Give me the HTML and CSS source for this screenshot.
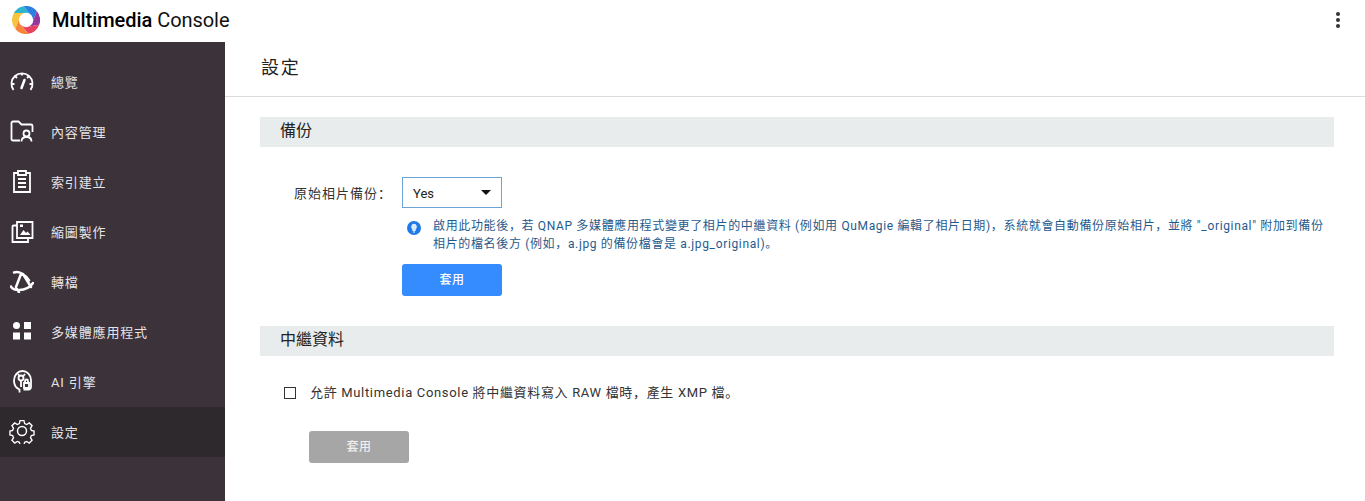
FILE: index.html
```html
<!DOCTYPE html>
<html lang="zh-Hant">
<head>
<meta charset="utf-8">
<title>Multimedia Console</title>
<link rel="stylesheet" href="styles.css">
</head>
<body>
<header class="topbar">
  <svg class="logo" viewBox="0 0 28 28" aria-hidden="true">
    <path d="M14.61 7.03 1.88 7A14 14 0 0 1 11.57.21L19.73 9.98Z" fill="#2fb4d0"/>
    <path d="M19.73 9.98 11.57.21A14 14 0 0 1 24.72 5L20.34 16.96Z" fill="#2b7fe2"/>
    <path d="M20.34 16.96 24.72 5A14 14 0 0 1 27.16 18.79L14.61 20.97Z" fill="#93389f"/>
    <path d="M14.61 20.97 27.16 18.79A14 14 0 0 1 16.43 27.79L8.27 18.02Z" fill="#e8405f"/>
    <path d="M8.27 18.02 16.43 27.79A14 14 0 0 1 3.28 23L7.66 11.04Z" fill="#f9853a"/>
    <path d="M7.66 11.04 3.28 23A14 14 0 0 1 1.88 7L14.61 7.03Z" fill="#f7c53c"/>
    <circle cx="14" cy="14" r="7.200" fill="#fff"/>
  </svg>
  <div class="brand"><b>Multimedia</b> Console</div>
  <svg class="more" viewBox="0 0 6 18" aria-hidden="true"><circle cx="3" cy="3" r="2"/><circle cx="3" cy="9" r="2"/><circle cx="3" cy="15" r="2"/></svg>
</header>
<div class="body">
  <nav class="sidebar">
    <a class="item"><svg class="ico" viewBox="0 0 24 24"><path d="M3.500 21A10.500 10.500 0 1 1 20.500 21M12 4.500v2M5.500 7.500 7 9M18.500 7.500 17 9M2.500 15h2M19.500 15h2"/><path class="thick" d="M14.500 11 11.500 19"/></svg><span>總覽</span></a>
    <a class="item"><svg class="ico" viewBox="0 0 24 24"><path d="M10 21.500H3a1.500 1.500 0 0 1-1.500-1.500V4a1.500 1.500 0 0 1 1.500-1.500h5.500l3 3H21A1.500 1.500 0 0 1 22.500 7v6"/><circle cx="16.500" cy="14.500" r="3"/><path d="M11.500 22.500c0-3 2-4.500 5-4.500s5 1.500 5 4.500"/></svg><span>內容管理</span></a>
    <a class="item"><svg class="ico" viewBox="0 0 24 24"><path d="M8 4H4v19h16V4h-4M8 2h8v4H8zM8 10h8M8 14h8M8 18h8"/></svg><span>索引建立</span></a>
    <a class="item"><svg class="ico" viewBox="0 0 24 24"><path d="M7 3h15.500v16H7zM7 6.500H3.500a1 1 0 0 0-1 1V23H18v-4"/><path class="fill" d="m10 16 3.500-5 2.500 3 1.500-1.500 3 3.500zM10 5.500h3V8h-3z"/></svg><span>縮圖製作</span></a>
    <a class="item"><svg class="ico" viewBox="0 0 24 24"><path class="thick" d="M4 3.500c5-1.500 11 1.500 15 8M1 17.500c1 2.500 4 3.500 8 3.500 6 0 11-2.500 14-7M11 5 6 18M13 5l8 13M7 20l2 3.500"/></svg><span>轉檔</span></a>
    <a class="item"><svg class="ico" viewBox="0 0 24 24"><circle class="fill" cx="6.500" cy="6.500" r="3.500"/><path class="fill" d="M14 3h7v7h-7zM3 13.500h7v7H3zM14 13.500h7v7h-7z"/></svg><span>多媒體應用程式</span></a>
    <a class="item"><svg class="ico" viewBox="0 0 24 24"><path d="M9.500 23.500v-3C6 19 4 15.500 4 11.500 4 6 8 2 12.500 2s8.500 4 8.500 9v7a2.500 2.500 0 0 1-2.500 2.500h-5"/><circle cx="11" cy="9" r="2.500"/><path d="M9 6.500 8 5M15 5l-2.500 3M11 11.500V18M14 14h5v5h-5zM15 14v-2a1.500 1.500 0 0 1 3 0v2"/></svg><span>AI 引擎</span></a>
    <a class="item active"><svg class="ico gear" viewBox="0 0 26 26"><circle cx="13" cy="13" r="4.500"/><path d="M10.800 1.500h4.400l.7 3.300 2.300 1 2.900-1.800 3.100 3.100-1.800 2.900 1 2.300 3 .7v4.400l-3 .7-1 2.300 1.800 2.900-3.100 3.100-2.900-1.800-2.300 1-.7 3h-4.400l-.7-3-2.300-1-2.900 1.800-3.100-3.100 1.800-2.900-1-2.300-3-.7v-4.400l3-.7 1-2.300-1.800-2.900 3.100-3.100 2.900 1.800 2.300-1z" transform="translate(1.300 1.300) scale(.9)"/></svg><span>設定</span></a>
  </nav>
  <main class="content">
    <h1 class="page-title">設定</h1>
    <div class="panel">
      <section class="backup">
        <h2 class="section-title">備份</h2>
        <div class="field">
          <label class="field-label">原始相片備份：</label>
          <div class="select"><span>Yes</span><i class="caret"></i></div>
        </div>
        <div class="note">
          <svg class="tip" viewBox="0 0 14 14" aria-hidden="true"><circle cx="7" cy="7" r="7" fill="#1f7ae8"/><path d="M7 2.800a3 3 0 0 1 1.700 5.400V10H5.300V8.200A3 3 0 0 1 7 2.800Z" fill="#dcebfb"/><path d="M6 11h2" stroke="#fff" stroke-width="1"/></svg>
          <p>啟用此功能後，若 QNAP 多媒體應用程式變更了相片的中繼資料 (例如用 QuMagie 編輯了相片日期)，系統就會自動備份原始相片，並將 "_original" 附加到備份相片的檔名後方 (例如，a.jpg 的備份檔會是 a.jpg_original)。</p>
        </div>
        <button class="btn primary">套用</button>
      </section>
      <section class="meta">
        <h2 class="section-title">中繼資料</h2>
        <div class="check"><i class="box"></i><span>允許 Multimedia Console 將中繼資料寫入 RAW 檔時，產生 XMP 檔。</span></div>
        <button class="btn disabled">套用</button>
      </section>
    </div>
  </main>
</div>
</body>
</html>
```

FILE: styles.css
```css
* { box-sizing: border-box; }
html, body { margin: 0; height: 100%; overflow: hidden; }
body {
  font-family: Roboto, "Noto Sans CJK SC", sans-serif;
  font-feature-settings: "locl" 0;
  background: #fff;
  color: #333;
  display: flex;
  flex-direction: column;
}
.topbar {
  height: 42px;
  flex: none;
  display: flex;
  align-items: center;
  padding: 0 24px 2px 12px;
}
.logo { width: 28px; height: 28px; flex: none; }
.brand { margin-left: 12px; font-size: 20px; letter-spacing: -.05px; color: #111; flex: 1; }
.brand b { font-weight: 500; color: #000; }
.more { width: 6px; height: 18px; fill: #333; }
.body { flex: 1; display: flex; min-height: 0; }
.sidebar {
  width: 225px;
  flex: none;
  background: #3b323a;
  padding-top: 15px;
}
.item {
  height: 50px;
  display: flex;
  align-items: center;
  color: #e6e3e6;
  font-size: 13px;
  letter-spacing: .85px;
  padding: 0 0 2px 10px;
}
.item.active { background: #2d292c; }
.ico {
  width: 24px;
  height: 24px;
  margin-right: 17px;
  flex: none;
  fill: none;
  stroke: #fff;
  stroke-width: 1.800;
}
.ico .thick { stroke-width: 2.500; stroke-linejoin: round; stroke-linecap: round; }
.ico .fill { fill: #fff; stroke: none; }
.gear { width: 26px; height: 26px; margin-left: -1px; margin-right: 16px; stroke-width: 1.500; }
.content { flex: 1; min-width: 0; }
.page-title {
  margin: 0;
  height: 55px;
  border-bottom: 1px solid #dcdcdc;
  padding: 13px 0 0 36px;
  font-size: 18px;
  letter-spacing: 1.800px;
  line-height: 26px;
  font-weight: 400;
  color: #222;
}
.panel { padding: 20px 31px 0 35px; }
.section-title {
  margin: 0;
  height: 30px;
  background: #e9ecec;
  padding: 0 0 2px 20px;
  font-size: 16px;
  line-height: 28px;
  font-weight: 400;
  color: #222;
}
.field {
  display: flex;
  align-items: center;
  margin-top: 30px;
}
.field-label {
  width: 142px;
  padding-left: 34px;
  font-size: 13px;
  letter-spacing: 1px;
  color: #333;
  white-space: nowrap;
}
.select {
  width: 100px;
  height: 31px;
  border: 1px solid #6ea3d8;
  display: flex;
  align-items: center;
  justify-content: space-between;
  padding: 2px 10px 0 10px;
  font-size: 13px;
  color: #222;
}
.caret {
  width: 0;
  height: 0;
  border-left: 5px solid transparent;
  border-right: 5px solid transparent;
  border-top: 5px solid #111;
  margin-bottom: 2px;
}
.note {
  display: flex;
  margin: 9px 0 0 147px;
  color: #1f5a8c;
  font-size: 12px;
  letter-spacing: .65px;
  line-height: 18px;
}
.tip { width: 14px; height: 14px; flex: none; margin: 4px 12px 0 0; }
.note p { margin: 0; padding-right: 8px; }
.btn {
  display: block;
  width: 100px;
  border: 0;
  border-radius: 3px;
  color: #fff;
  font: 500 12px/16px Roboto, "Noto Sans CJK SC", sans-serif;
  letter-spacing: .6px;
  padding: 0;
}
.primary { height: 32px; background: #358cff; margin: 11px 0 0 142px; }
.meta { margin-top: 30px; }
.check {
  display: flex;
  align-items: center;
  margin: 27px 0 0 24px;
  font-size: 13px;
  letter-spacing: .67px;
  line-height: 20px;
  color: #333;
}
.box {
  width: 12px;
  height: 12px;
  border: 1px solid #333;
  margin-right: 14px;
  flex: none;
}
.disabled { height: 32px; background: #a6a6a6; margin: 28px 0 0 49px; color: #eee; }
```
